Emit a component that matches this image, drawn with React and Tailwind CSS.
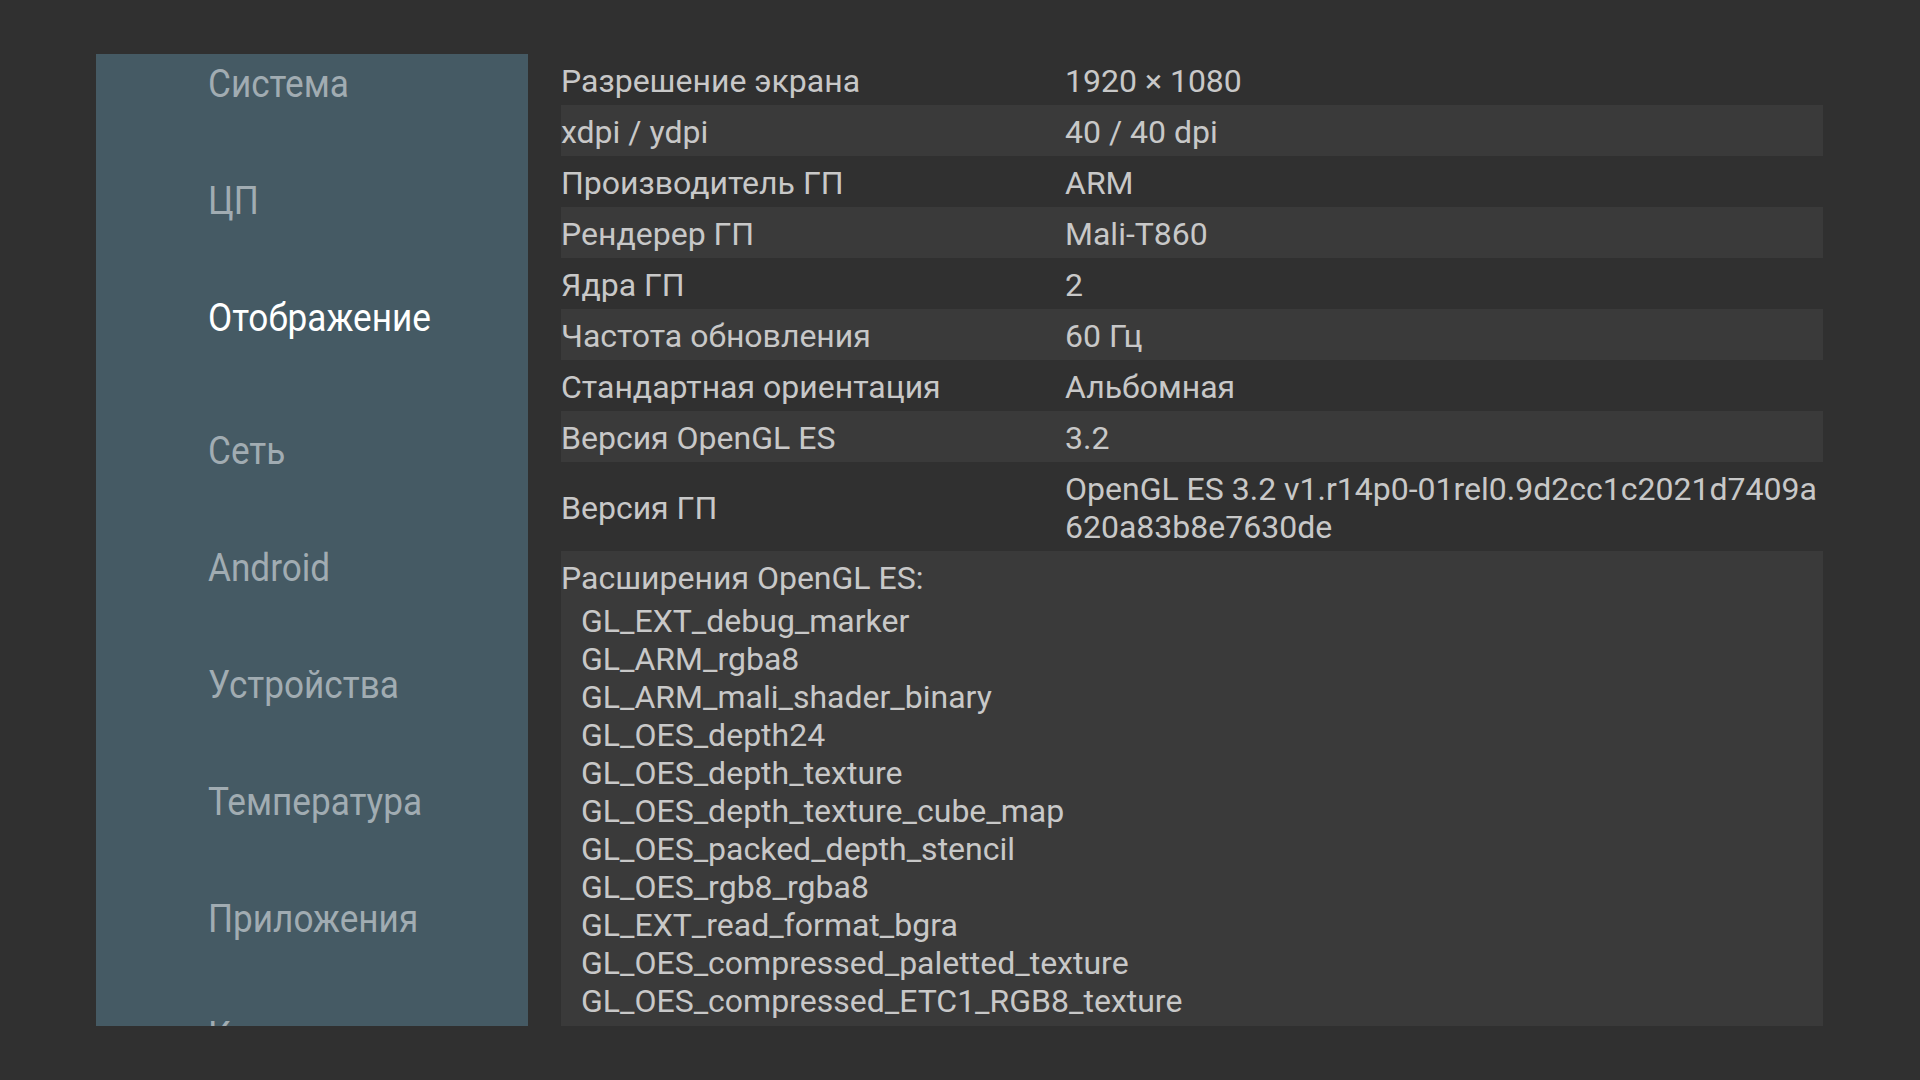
import React from "react";

const menu = [
  { name: "Система" },
  { name: "ЦП" },
  { name: "Отображение", active: true },
  { name: "Сеть" },
  { name: "Android" },
  { name: "Устройства" },
  { name: "Температура" },
  { name: "Приложения" },
  { name: "Кодеки" },
];

const rows = [
  ["Разрешение экрана", "1920 × 1080"],
  ["xdpi / ydpi", "40 / 40 dpi"],
  ["Производитель ГП", "ARM"],
  ["Рендерер ГП", "Mali-T860"],
  ["Ядра ГП", "2"],
  ["Частота обновления", "60 Гц"],
  ["Стандартная ориентация", "Альбомная"],
  ["Версия OpenGL ES", "3.2"],
];

const extensions = [
  "GL_EXT_debug_marker",
  "GL_ARM_rgba8",
  "GL_ARM_mali_shader_binary",
  "GL_OES_depth24",
  "GL_OES_depth_texture",
  "GL_OES_depth_texture_cube_map",
  "GL_OES_packed_depth_stencil",
  "GL_OES_rgb8_rgba8",
  "GL_EXT_read_format_bgra",
  "GL_OES_compressed_paletted_texture",
  "GL_OES_compressed_ETC1_RGB8_texture",
];

const Sidebar = () => {
  return (
    <aside className="w-[432px] shrink-0 bg-[#455a64] overflow-hidden">
      {menu.map((item) => (
        <div
          key={item.name}
          className={`pl-[112px] pt-[8px] ${item.active ? "h-[133px]" : "h-[117px]"}`}
        >
          <span
            className={`inline-block origin-left scale-x-[0.925] text-[38px] leading-none whitespace-nowrap ${
              item.active ? "text-white" : "text-[#a1acb2]"
            }`}
          >
            {item.name}
          </span>
        </div>
      ))}
    </aside>
  );
};

const Row = ({ label, value, striped }) => {
  return (
    <div
      className={`flex items-center pt-[8px] pb-[5px] leading-[38px] ${
        striped ? "bg-[#3a3a3a]" : ""
      }`}
    >
      <div className="w-[504px] shrink-0">{label}</div>
      <div className="flex-1">{value}</div>
    </div>
  );
};

export default function App() {
  return (
    <main className="h-[1080px] w-[1920px] bg-[#303030] flex gap-[33px] pt-[54px] pb-[54px] pl-[96px] pr-[97px] overflow-hidden font-['Roboto',sans-serif] text-[32px] text-[#c8c8c8]">
      <Sidebar />
      <section className="flex-1 flex flex-col min-w-0 overflow-hidden">
        {rows.map(([label, value], i) => (
          <Row key={label} label={label} value={value} striped={i % 2 === 1} />
        ))}
        <Row
          label="Версия ГП"
          value={
            <>
              OpenGL ES 3.2 v1.r14p0-01rel0.9d2cc1c2021d7409a
              <br />
              620a83b8e7630de
            </>
          }
        />
        <div className="flex-1 min-h-0 overflow-hidden bg-[#3a3a3a] pt-[8px] leading-[38px]">
          <div>Расширения OpenGL ES:</div>
          <ul className="mt-[5px] pl-[20px]">
            {extensions.map((ext) => (
              <li key={ext} className="whitespace-nowrap">
                {ext}
              </li>
            ))}
          </ul>
        </div>
      </section>
    </main>
  );
}
